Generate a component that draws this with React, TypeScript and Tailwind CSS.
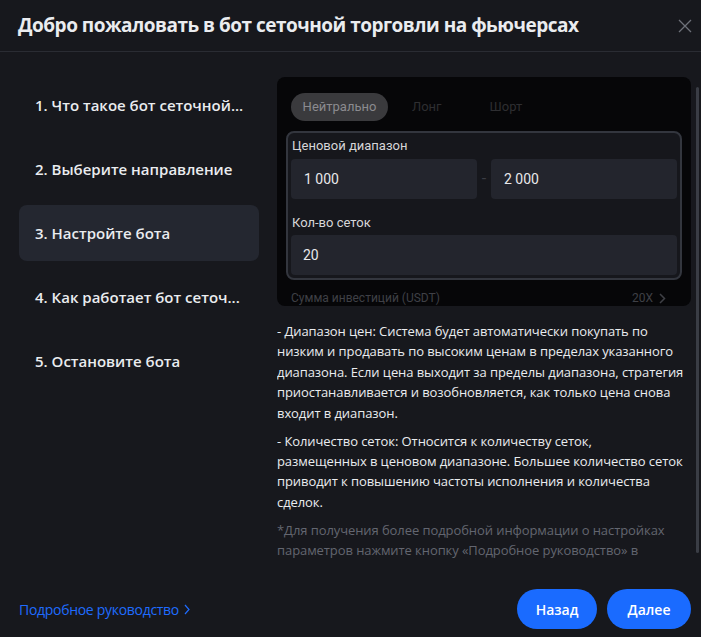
import React from 'react';

const steps = [
  '1. Что такое бот сеточной...',
  '2. Выберите направление',
  '3. Настройте бота',
  '4. Как работает бот сеточ...',
  '5. Остановите бота',
];

const Preview: React.FC = () => (
  <div className="rounded-lg bg-[#060608] pt-[16px] px-[9px]" style={{ fontFamily: 'Roboto, "Noto Sans", sans-serif' }}>
    <div className="flex items-center h-[28px] pl-[5px] text-[13px]">
      <div className="h-[28px] w-[97px] rounded-full bg-[#3a3a3d] flex items-center justify-center text-[#8b8b8f]">Нейтрально</div>
      <div className="ml-[24px] text-[#2e2e31]">Лонг</div>
      <div className="ml-[48px] text-[#2e2e31]">Шорт</div>
    </div>
    <div className="mt-[10px] rounded-lg border-2 border-[#33363e] bg-[#16171c] px-[3px] pt-[3px] pb-[3px]">
      <div className="text-[13px] text-[#d6d6d8] h-[20px] leading-[20px] pl-[1px]">Ценовой диапазон</div>
      <div className="flex items-center mt-[3px]">
        <div className="flex-1 h-[40px] rounded bg-[#23252d] flex items-center pl-[13px] text-[14px] text-[#e8e8ea]">1 000</div>
        <div className="w-[14px] flex justify-center text-[#3b3d44]">-</div>
        <div className="flex-1 h-[40px] rounded bg-[#23252d] flex items-center pl-[13px] text-[14px] text-[#e8e8ea]">2 000</div>
      </div>
      <div className="text-[13px] text-[#d6d6d8] h-[20px] leading-[20px] mt-[14px] pl-[1px]">Кол-во сеток</div>
      <div className="mt-[2px] h-[40px] rounded bg-[#23252d] flex items-center pl-[12px] text-[14px] text-[#e8e8ea]">20</div>
    </div>
    <div className="mt-[10px] flex items-center justify-between h-[16px] pl-[5px] pr-[16px] text-[12px] leading-[16px] text-[#3f4046] overflow-hidden">
      <span>Сумма инвестиций (USDT)</span>
      <span className="flex items-center gap-[6px]">
        20X
        <svg width="7" height="11" viewBox="0 0 7 11" fill="none"><path d="M1 1l4.5 4.5L1 10" stroke="#3f4046" strokeWidth="1.5" /></svg>
      </span>
    </div>
  </div>
);

export default function App() {
  return (
    <div className="w-[701px] h-[637px] bg-[#17181d] flex flex-col overflow-hidden" style={{ fontFamily: '"Open Sans", "Noto Sans", sans-serif' }}>
      <div className="h-[52px] flex items-center justify-between pl-[18px] pr-[9px] border-b border-[#2a2c33] shrink-0">
        <h1 className="text-[19px] font-bold text-[#eaecef] tracking-[-0.5px]">Добро пожаловать в бот сеточной торговли на фьючерсах</h1>
        <svg width="14" height="14" viewBox="0 0 14 14" fill="none"><path d="M1 1l12 12M13 1L1 13" stroke="#6e717a" strokeWidth="1.3" /></svg>
      </div>

      <div className="flex pl-[19px] pt-[25px] h-[510px] shrink-0">
        <div className="w-[240px] flex flex-col gap-[8px] shrink-0">
          {steps.map((s, i) => (
            <div
              key={s}
              className={`h-[56px] flex items-center pl-[16px] rounded-lg text-[15px] font-semibold text-[#eaecef] ${i === 2 ? 'bg-[#242730]' : ''}`}
            >
              {s}
            </div>
          ))}
        </div>

        <div className="ml-[18px] w-[414px] h-[485px] overflow-hidden shrink-0">
          <Preview />
          <div className="mt-[15px] text-[13px] tracking-[-0.08px] leading-[20.4px] text-[#eaecef]">
            <p>- Диапазон цен: Система будет автоматически покупать по низким и продавать по высоким ценам в пределах указанного диапазона. Если цена выходит за пределы диапазона, стратегия приостанавливается и возобновляется, как только цена снова входит в диапазон.</p>
            <p className="mt-[7.5px]">- Количество сеток: Относится к количеству сеток,<br />размещенных в ценовом диапазоне. Большее количество сеток приводит к повышению частоты исполнения и количества сделок.</p>
            <p className="mt-[7.5px] text-[#636670]">*Для получения более подробной информации о настройках параметров нажмите кнопку «Подробное руководство» в<br />правом нижнем углу.</p>
          </div>
        </div>

        <div className="ml-[5px] mt-[10px] w-[3px] h-[466px] rounded-full bg-[#3a3d45] shrink-0" />
      </div>

      <div className="flex-1 flex items-start justify-between pl-[19px] pr-[10px] pt-[27px]">
        <a className="flex items-center gap-[5px] h-[40px] text-[14px] tracking-[-0.3px] text-[#1f6cff] cursor-pointer">
          Подробное руководство
          <svg width="6" height="11" viewBox="0 0 6 11" fill="none"><path d="M1 1l4 4.5L1 10" stroke="#1f6cff" strokeWidth="1.2" /></svg>
        </a>
        <div className="flex gap-[10px]">
          <button className="h-[40px] w-[80px] rounded-full bg-[#1a6bff] text-white text-[14px] font-semibold">Назад</button>
          <button className="h-[40px] w-[84px] rounded-full bg-[#1a6bff] text-white text-[14px] font-semibold">Далее</button>
        </div>
      </div>
    </div>
  );
}
